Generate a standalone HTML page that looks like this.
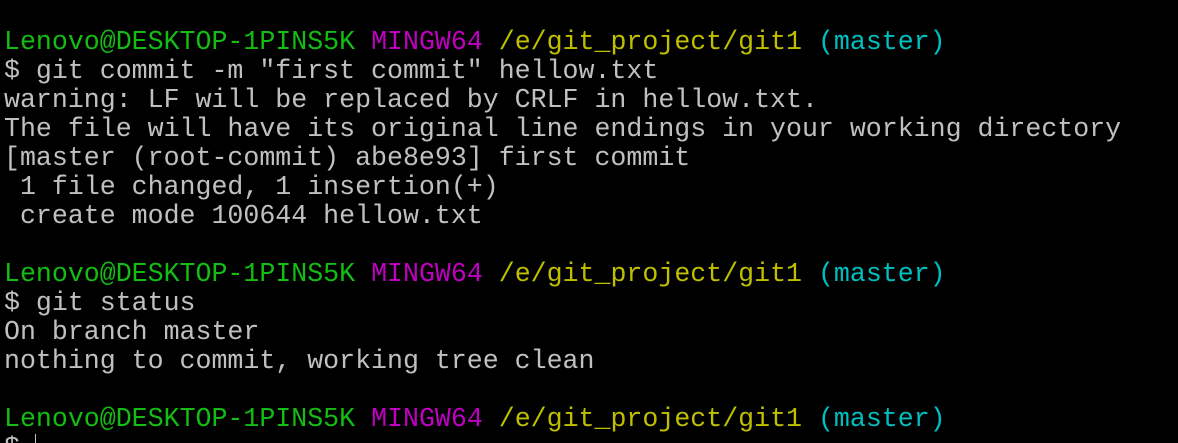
<!DOCTYPE html>
<html><head><style>
html,body{margin:0;padding:0;background:#000;width:1178px;height:443px;overflow:hidden;position:relative}
pre{margin:0;position:absolute;left:4px;top:28px;font-family:"Liberation Mono",monospace;font-size:26.6px;line-height:29px;color:#c0c0c0;white-space:pre}
.g{color:#13bd13}.m{color:#c000c0}.y{color:#bfbf00}.c{color:#00bfbf}
.cur{position:absolute;left:35px;top:434px;width:1px;height:9px;background:#c0c0c0}
</style></head><body>
<pre><span class="g">Lenovo@DESKTOP-1PINS5K</span> <span class="m">MINGW64</span> <span class="y">/e/git_project/git1</span> <span class="c">(master)</span>
$ git commit -m "first commit" hellow.txt
warning: LF will be replaced by CRLF in hellow.txt.
The file will have its original line endings in your working directory
[master (root-commit) abe8e93] first commit
 1 file changed, 1 insertion(+)
 create mode 100644 hellow.txt

<span class="g">Lenovo@DESKTOP-1PINS5K</span> <span class="m">MINGW64</span> <span class="y">/e/git_project/git1</span> <span class="c">(master)</span>
$ git status
On branch master
nothing to commit, working tree clean

<span class="g">Lenovo@DESKTOP-1PINS5K</span> <span class="m">MINGW64</span> <span class="y">/e/git_project/git1</span> <span class="c">(master)</span>
$</pre>
<div class="cur"></div>
</body></html>
